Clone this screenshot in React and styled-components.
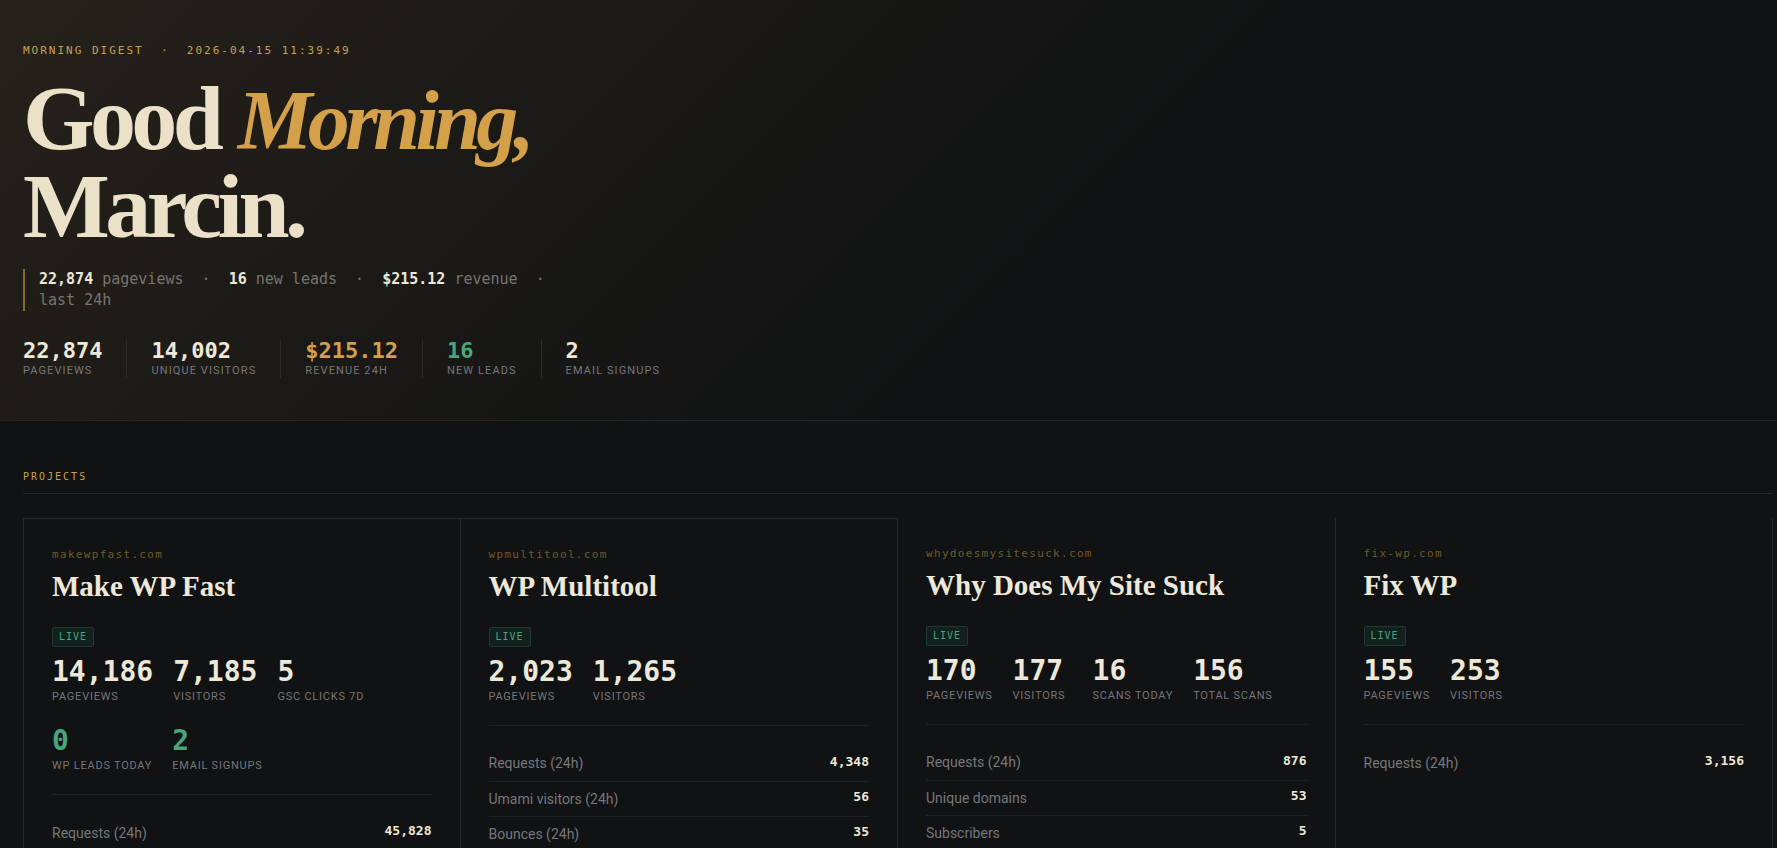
import React from "react";
import styled, { createGlobalStyle } from "styled-components";

const serif = `"Liberation Serif", "Times New Roman", serif`;
const sans = `Roboto, "Noto Sans", sans-serif`;
const mono = `"DejaVu Sans Mono", "Liberation Mono", monospace`;

const tones = { cream: "#ede8d8", gold: "#d4a04a", green: "#4aa57c" };

const GlobalStyle = createGlobalStyle`
  *, *::before, *::after { box-sizing: border-box; }
  body {
    margin: 0;
    background: #101213;
    color: ${tones.cream};
    font-family: ${sans};
  }
`;

const Hero = styled.header`
  padding: 44px 23px 42px;
  border-bottom: 1px solid #24272a;
  background: linear-gradient(135deg, #26211b 0%, #101213 60%);
`;

const Eyebrow = styled.p`
  margin: 0 0 16px;
  font: 400 11px/14px ${mono};
  letter-spacing: 2px;
  white-space: pre-wrap;
  color: #c9a050;
`;

const Greeting = styled.h1`
  margin: 0;
  font: 700 92px/88px ${serif};
  letter-spacing: -0.05em;
  color: #ebe1c8;

  em {
    font-size: 84px;
    line-height: 80px;
    font-style: italic;
    color: ${tones.gold};
  }
`;

const Summary = styled.p`
  max-width: 560px;
  margin: 19px 0 28px;
  padding-left: 14px;
  border-left: 2px solid #86682f;
  font: 400 15px/21px ${mono};
  color: #77746f;

  strong {
    font-weight: 700;
    color: ${tones.cream};
  }
`;

const HeroStats = styled.dl`
  display: flex;
  flex-wrap: wrap;
  gap: 12px 24px;
  margin: 0;
`;

const HeroStat = styled.div`
  display: flex;
  flex-direction: column-reverse;
  justify-content: flex-end;
  padding-right: 24px;
  border-right: 1px solid #2b2a27;

  &:last-child {
    padding-right: 0;
    border-right: 0;
  }
`;

const StatLabel = styled.dt`
  font: 400 11px/${(p) => (p.$large ? "17px" : "15px")} ${sans};
  letter-spacing: ${(p) => (p.$large ? "0.07em" : "0.1em")};
  text-transform: uppercase;
  color: #77777a;
`;

const StatValue = styled.dd`
  margin: 0;
  font: 700 ${(p) => (p.$large ? "28px/32px" : "22px/24px")} ${mono};
  color: ${(p) => tones[p.$tone || "cream"]};
`;

const Projects = styled.main`
  padding: 48px 4px 48px 23px;
`;

const SectionTitle = styled.h2`
  margin: 0 0 24px;
  padding-bottom: 9px;
  border-bottom: 1px solid #222528;
  font: 400 10px/15px ${mono};
  letter-spacing: 2px;
  text-transform: uppercase;
  color: #c9a050;
`;

const Grid = styled.div`
  display: grid;
  grid-template-columns: repeat(4, 1fr);
`;

const Card = styled.article`
  padding: 28px;
  border: 1px solid #25282a;
  border-top-width: ${(p) => (p.$lined ? "1px" : "0")};

  & + & {
    border-left: 0;
  }
`;

const Domain = styled.a`
  display: block;
  font: 400 11px/16px ${mono};
  letter-spacing: 0.12em;
  text-decoration: none;
  color: #6f5a2c;
`;

const CardTitle = styled.h3`
  margin: 6px 0 24px;
  font: 700 29px/34px ${serif};
  color: ${tones.cream};
`;

const Badge = styled.span`
  display: block;
  width: fit-content;
  padding: 0 6px;
  border: 1px solid #1c3b30;
  border-radius: 2px;
  background: #12211d;
  font: 400 10px/18px ${mono};
  letter-spacing: 1px;
  color: ${tones.green};
`;

const CardStats = styled.dl`
  display: flex;
  flex-wrap: wrap;
  gap: 20px;
  margin: 9px 0 20px;
`;

const CardStat = styled.div`
  display: flex;
  flex-direction: column-reverse;
  min-width: 60px;
`;

const Metrics = styled.table`
  width: 100%;
  border-collapse: collapse;
`;

const MetricsWrap = styled.div`
  padding-top: 20px;
  border-top: 1px solid #1f2224;
`;

const MetricRow = styled.tr`
  border-bottom: 1px solid #1f2224;

  &:last-child {
    border-bottom: 0;
  }
`;

const MetricName = styled.th`
  height: 35px;
  padding: 0;
  text-align: left;
  font: 400 14px/20px ${sans};
  color: #77777a;
`;

const MetricValue = styled.td`
  padding: 0 0 3px;
  text-align: right;
  font: 700 13px/18px ${mono};
  color: ${tones.cream};
`;

const summaryStats = [
  { value: "22,874", label: "Pageviews" },
  { value: "14,002", label: "Unique visitors" },
  { value: "$215.12", label: "Revenue 24h", tone: "gold" },
  { value: "16", label: "New leads", tone: "green" },
  { value: "2", label: "Email signups" },
];

const projects = [
  {
    domain: "makewpfast.com",
    name: "Make WP Fast",
    lined: true,
    stats: [
      { value: "14,186", label: "Pageviews" },
      { value: "7,185", label: "Visitors" },
      { value: "5", label: "GSC clicks 7d" },
      { value: "0", label: "WP leads today", tone: "green" },
      { value: "2", label: "Email signups", tone: "green" },
    ],
    metrics: [["Requests (24h)", "45,828"]],
  },
  {
    domain: "wpmultitool.com",
    name: "WP Multitool",
    lined: true,
    stats: [
      { value: "2,023", label: "Pageviews" },
      { value: "1,265", label: "Visitors" },
    ],
    metrics: [
      ["Requests (24h)", "4,348"],
      ["Umami visitors (24h)", "56"],
      ["Bounces (24h)", "35"],
    ],
  },
  {
    domain: "whydoesmysitesuck.com",
    name: "Why Does My Site Suck",
    stats: [
      { value: "170", label: "Pageviews" },
      { value: "177", label: "Visitors" },
      { value: "16", label: "Scans today" },
      { value: "156", label: "Total scans" },
    ],
    metrics: [
      ["Requests (24h)", "876"],
      ["Unique domains", "53"],
      ["Subscribers", "5"],
    ],
  },
  {
    domain: "fix-wp.com",
    name: "Fix WP",
    stats: [
      { value: "155", label: "Pageviews" },
      { value: "253", label: "Visitors" },
    ],
    metrics: [["Requests (24h)", "3,156"]],
  },
];

function ProjectCard({ project }) {
  return (
    <Card $lined={project.lined}>
      <Domain href={`https://${project.domain}`}>{project.domain}</Domain>
      <CardTitle>{project.name}</CardTitle>
      <Badge>LIVE</Badge>
      <CardStats>
        {project.stats.map((s) => (
          <CardStat key={s.label}>
            <StatLabel $large>{s.label}</StatLabel>
            <StatValue $large $tone={s.tone}>{s.value}</StatValue>
          </CardStat>
        ))}
      </CardStats>
      <MetricsWrap>
        <Metrics>
          <tbody>
            {project.metrics.map(([name, value]) => (
              <MetricRow key={name}>
                <MetricName scope="row">{name}</MetricName>
                <MetricValue>{value}</MetricValue>
              </MetricRow>
            ))}
          </tbody>
        </Metrics>
      </MetricsWrap>
    </Card>
  );
}

export default function App() {
  return (
    <>
      <GlobalStyle />
      <Hero>
        <Eyebrow>{"MORNING DIGEST  ·  2026-04-15 11:39:49"}</Eyebrow>
        <Greeting>
          Good <em>Morning,</em>
          <br />
          Marcin.
        </Greeting>
        <Summary>
          <strong>22,874</strong> pageviews &nbsp;·&nbsp; <strong>16</strong> new leads
          &nbsp;·&nbsp; <strong>$215.12</strong> revenue &nbsp;·&nbsp; last 24h
        </Summary>
        <HeroStats>
          {summaryStats.map((s) => (
            <HeroStat key={s.label}>
              <StatLabel>{s.label}</StatLabel>
              <StatValue $tone={s.tone}>{s.value}</StatValue>
            </HeroStat>
          ))}
        </HeroStats>
      </Hero>
      <Projects>
        <SectionTitle>Projects</SectionTitle>
        <Grid>
          {projects.map((p) => (
            <ProjectCard key={p.domain} project={p} />
          ))}
        </Grid>
      </Projects>
    </>
  );
}
